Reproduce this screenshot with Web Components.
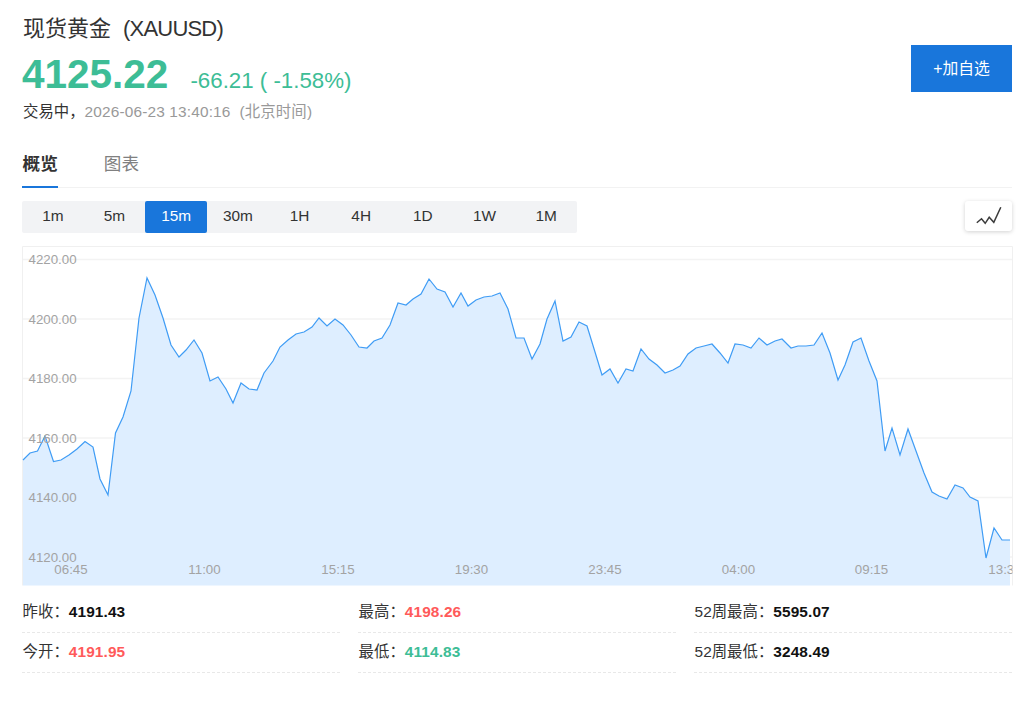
<!DOCTYPE html>
<html lang="zh"><head><meta charset="utf-8"><title>现货黄金</title>
<style>
html,body{margin:0;padding:0;background:#fff}
body{font-family:"Liberation Sans","Noto Sans CJK SC",sans-serif;color:#333;width:1024px;height:710px;overflow:hidden}
quote-page{display:block}
</style></head><body>
<quote-page>
  <quote-header></quote-header>
  <quote-tabs></quote-tabs>
  <period-bar></period-bar>
  <price-chart></price-chart>
  <stat-grid>
    <stat-item label="昨收：" value="4191.43"></stat-item>
    <stat-item label="最高：" value="4198.26" tone="up"></stat-item>
    <stat-item label="52周最高：" value="5595.07"></stat-item>
    <stat-item label="今开：" value="4191.95" tone="up"></stat-item>
    <stat-item label="最低：" value="4114.83" tone="down"></stat-item>
    <stat-item label="52周最低：" value="3248.49"></stat-item>
  </stat-grid>
</quote-page>
<script>
const F='"Liberation Sans","Noto Sans CJK SC",sans-serif';
class Base extends HTMLElement{
  html(){return ''}
  connectedCallback(){ if(!this.shadowRoot){this.attachShadow({mode:'open'}).innerHTML=this.html();} }
}
customElements.define('quote-page',class extends Base{
  html(){return `<style>:host{display:block;padding:0 12px 0 22px;box-sizing:border-box;width:1024px}</style><slot></slot>`}
});
customElements.define('quote-header',class extends Base{
  html(){return `<style>
  :host{display:flex;justify-content:space-between;align-items:flex-start;height:134px;box-sizing:border-box;padding-top:14px;font-family:${F}}
  .t{font-size:22px;line-height:30px;color:#333;margin-left:1px}
  .t span{margin-left:12px;letter-spacing:-.8px}
  .p{display:flex;align-items:baseline;margin-top:8px;height:44px}
  .v{font-size:40.5px;font-weight:700;color:#3dbd96;line-height:44px}
  .c{font-size:22.3px;color:#3dbd96;margin-left:22px}
  .s{font-size:15.4px;line-height:20px;margin-top:6px;margin-left:1px;color:#333}
  .s i{font-style:normal;color:#999;letter-spacing:.16px}
  button{all:unset;box-sizing:border-box;width:101px;height:47px;margin-top:31px;background:#1976db;color:#fff;font-size:15.8px;text-align:center;line-height:45px;font-family:${F}}
  </style>
  <div><div class="t">现货黄金<span>(XAUUSD)</span></div>
  <div class="p"><span class="v">4125.22</span><span class="c">-66.21 ( -1.58%)</span></div>
  <div class="s">交易中，<i>2026-06-23 13:40:16&nbsp; (北京时间)</i></div></div>
  <button>+加自选</button>`}
});
customElements.define('quote-tabs',class extends Base{
  html(){return `<style>
  :host{display:flex;gap:45px;height:54px;box-sizing:border-box;border-bottom:1px solid #f2f2f2;margin-bottom:13px;padding-top:17px;font-family:${F}}
  a{display:block;height:36px;font-size:17.6px;line-height:26px;color:#808080;box-sizing:border-box;padding:0 .4px 0 .6px}
  a.on{color:#333;font-weight:700;border-bottom:2px solid #1976db;height:37px}
  </style><a class="on">概览</a><a>图表</a>`}
});
customElements.define('period-bar',class extends Base{
  html(){const p=['1m','5m','15m','30m','1H','4H','1D','1W','1M'];
  return `<style>
  :host{display:flex;justify-content:space-between;align-items:flex-start;height:45px;font-family:${F}}
  .g{display:flex;background:#f2f3f5;border-radius:2px;width:555px;height:32px}
  .g b{flex:1;font-weight:400;font-size:15.4px;line-height:30px;text-align:center;color:#333;border-radius:2px}
  .g b.on{background:#1976db;color:#fff}
  .i{width:47px;height:30px;background:#fff;border-radius:3px;box-shadow:0 1px 4px rgba(0,0,0,.18);display:flex;align-items:center;justify-content:center}
  </style><div class="g">${p.map(x=>`<b class="${x=='15m'?'on':''}">${x}</b>`).join('')}</div>
  <div class="i"><svg width="26" height="18" viewBox="0 0 26 18"><path d="M.8 15.7 5.5 11.7 9.2 16.3 13.2 10.3 17.8 15.3 24.8.3" fill="none" stroke="#3c3c3c" stroke-width="1.5"/></svg></div>`}
});
const PTS=[[23,460],[30,453],[37.5,451],[45,436],[53.5,461.5],[61,460],[69,455],[77,449],[85,441.5],[93,447],[100,479],[108,495],[115.5,433],[123,417],[131,391],[139,318],[147,278],[155,295],[163,318],[171,345],[179,357],[186,350],[194,340],[202,353],[210,381],[218,377],[226,389],[233,403],[241,383],[249,389],[257,390],[264,373],[273,361],[280,347],[288,340],[296,334],[304,332],[312,327],[319,318],[327,326],[335,319],[343,325],[351,335],[359,347],[367,348],[374,341],[382,338],[390,325],[398,303],[406,305],[413,299],[421,294],[429,279],[437,289],[445,292],[453,307],[461,293],[468,306],[476,300],[484,297],[492,296],[500,293],[508,309],[516,338],[524,338],[532,359],[540,344],[547,319],[555,301],[563,341],[571,337],[579,322],[587,326],[595,352],[602,375],[610,369],[618,383],[626,369],[633,371],[641,349],[649,359],[657,365],[665,373],[673,370],[680,366],[688,354],[696,348],[704,346],[712,344],[720,353],[728,363],[735,344],[743,345],[751,348],[759,338],[767,345],[775,341],[782,339],[791,348],[798,346],[806,346],[814,345],[822,333],[830,353],[838,380],[845,365],[853,342],[861,338],[869,361],[877,381],[885,451],[892,428],[900,455],[908,429],[916,451],[924,473],[932,492],[939,496],[947,499],[955,485],[963,488],[970,497],[978,501],[986,558],[994,528],[1002,540],[1010,540]];
customElements.define('price-chart',class extends Base{
  html(){
    const ox=22,oy=246;
    const line=PTS.map(p=>`${p[0]-ox},${p[1]-oy}`).join(' ');
    const ys=[[259.5,'4220.00'],[319,'4200.00'],[378.5,'4180.00'],[438,'4160.00'],[497.5,'4140.00'],[557,'4120.00']];
    const xs=[[71,'06:45'],[204.5,'11:00'],[338,'15:15'],[471.5,'19:30'],[605,'23:45'],[738.5,'04:00'],[871.5,'09:15'],[1005,'13:30']];
    return `<style>:host{display:block;width:991px;height:340px;font-family:${F}}svg{display:block}text{font:13.3px ${F};fill:#a3a3a3}</style>
    <svg width="991" height="340" viewBox="0 0 991 340">
      <path d="M.5 339.5V.5H990.5V339.5" fill="none" stroke="#f0f0f0"/>
      ${ys.map(y=>`<line x1="1" x2="990" y1="${y[0]-oy}" y2="${y[0]-oy}" stroke="#f3f3f3" stroke-width="1.5"/>`).join('')}
      <polygon points="1,339.5 ${line} 988,339.5" fill="#deeeff"/>
      <polyline points="${line}" fill="none" stroke="#3f9cf5" stroke-width="1.2"/>
      <svg x="0" y="0" width="990.5" height="340">
      ${ys.map(y=>`<text x="6.5" y="${y[0]-oy+4.5}">${y[1]}</text>`).join('')}
      ${xs.map(x=>`<text x="${x[0]-ox}" y="${327.5}" text-anchor="middle">${x[1]}</text>`).join('')}
      </svg>
    </svg>`}
});
customElements.define('stat-grid',class extends Base{
  html(){return `<style>:host{display:grid;grid-template-columns:repeat(3,318px);column-gap:18px;margin-top:7px}</style><slot></slot>`}
});
customElements.define('stat-item',class extends Base{
  html(){const t=this.getAttribute('tone');const c=t=='up'?'#ff5a5a':t=='down'?'#3dbd96':'#111';
  return `<style>:host{display:block;height:40px;box-sizing:border-box;border-bottom:1px dashed #e8e8e8;font-family:${F};font-size:15.4px;line-height:38px;color:#333;padding-left:.6px}b{color:${c};letter-spacing:.12px}</style>${this.getAttribute('label')}<b>${this.getAttribute('value')}</b>`}
});
</script>
</body></html>
